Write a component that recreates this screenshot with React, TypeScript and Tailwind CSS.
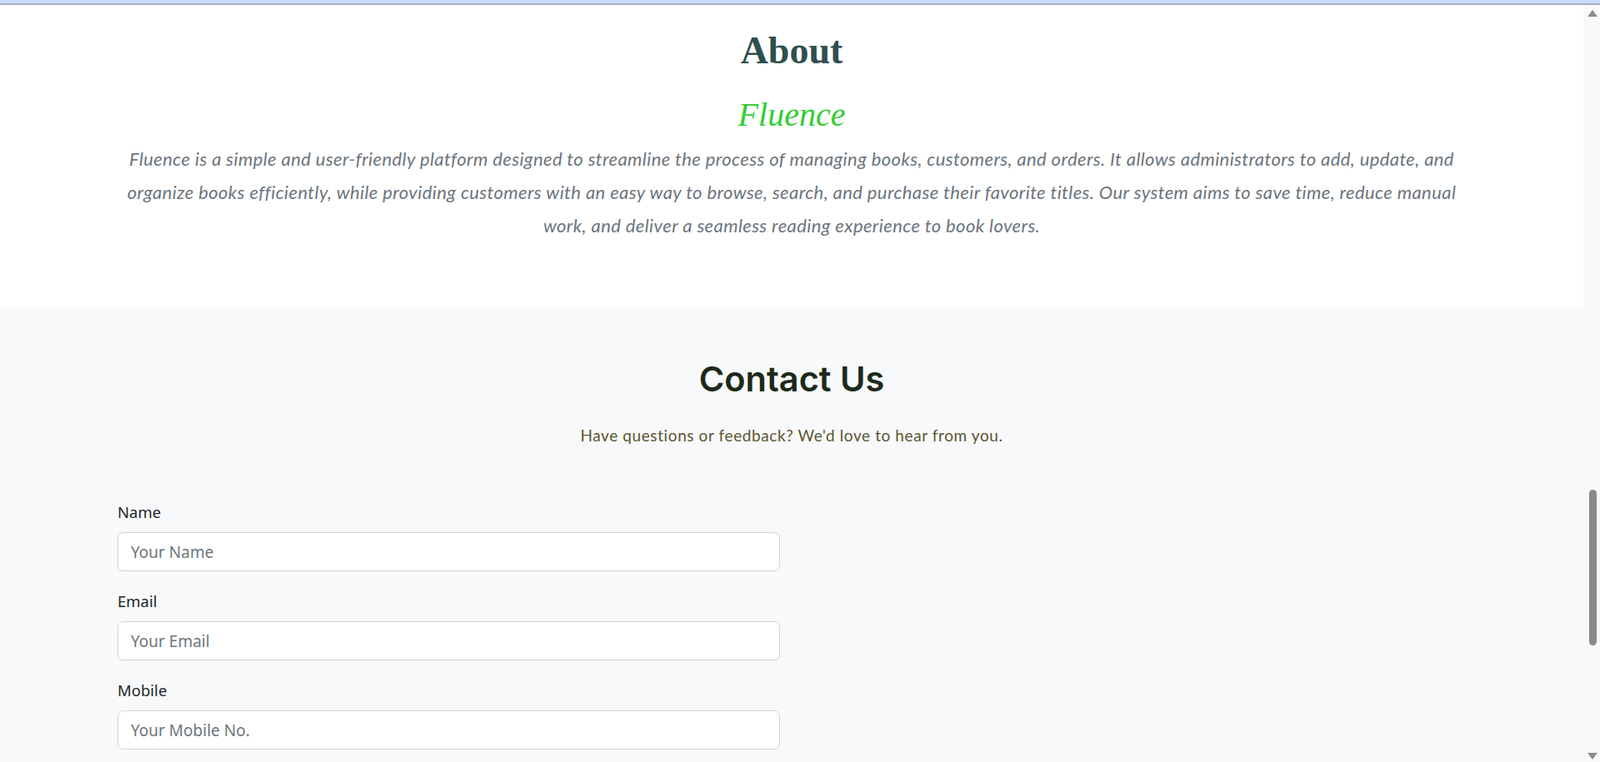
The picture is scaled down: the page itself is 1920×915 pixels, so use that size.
export default function App() {
  const inputCls =
    "block w-full h-[47px] rounded-[7px] border border-[#ced4da] bg-white px-[15px] text-[19px] text-[#212529] placeholder:text-[#6c757d] outline-none";
  const labelCls = "block text-[18.5px] leading-[27px] text-[#212529]";
  return (
    <div className="h-[915px] w-[1920px] overflow-hidden flex flex-col bg-white">
      <div className="h-[4px] bg-[#c7daf6]" />
      <div className="h-[2px] bg-[#a4b0c6]" />
      <div className="flex flex-1 min-h-0">
        <main className="flex-1 min-w-0 overflow-hidden">
          <section className="bg-white pt-[28px] h-[364px] text-center">
            <h2
              className="text-[46px] leading-[53px] font-bold text-[#2f4f4f]"
              style={{ fontFamily: '"Liberation Serif", serif' }}
            >
              About
            </h2>
            <h3
              className="mt-[27px] text-[40px] leading-[48px] italic text-[#32cd32]"
              style={{ fontFamily: '"Liberation Serif", serif' }}
            >
              Fluence
            </h3>
            <p
              className="mt-[9px] text-[22px] leading-[40px] tracking-[0.4px] italic text-[#6c757d]"
              style={{ fontFamily: 'Lato, sans-serif' }}
            >
              Fluence is a simple and user-friendly platform designed to streamline the process of managing books, customers, and orders. It allows administrators to add, update, and
              <br />
              organize books efficiently, while providing customers with an easy way to browse, search, and purchase their favorite titles. Our system aims to save time, reduce manual
              <br />
              work, and deliver a seamless reading experience to book lovers.
            </p>
          </section>
          <section className="bg-[#f8f9fa] pt-[61px] h-[545px]">
            <h2
              className="text-center text-[41.5px] leading-[48px] font-semibold text-[#1c2a1a]"
              style={{ fontFamily: 'Inter, sans-serif' }}
            >
              Contact Us
            </h2>
            <p
              className="mt-[30px] text-center text-[19px] leading-[27px] tracking-[0.6px] text-[#5a5530]"
              style={{ fontFamily: 'Lato, sans-serif' }}
            >
              Have questions or feedback? We'd love to hear from you.
            </p>
            <div className="mx-auto mt-[65px] w-[1618px]" style={{ fontFamily: '"Noto Sans", sans-serif' }}>
              <form className="w-[795px] flex flex-col gap-[22px]">
                <div>
                  <label className={labelCls}>Name</label>
                  <input className={`${inputCls} mt-[11px]`} placeholder="Your Name" />
                </div>
                <div>
                  <label className={labelCls}>Email</label>
                  <input className={`${inputCls} mt-[11px]`} placeholder="Your Email" />
                </div>
                <div>
                  <label className={labelCls}>Mobile</label>
                  <input className={`${inputCls} mt-[11px]`} placeholder="Your Mobile No." />
                </div>
              </form>
            </div>
          </section>
        </main>
        <div className="w-[20px] bg-[#f9f9f9] flex flex-col items-center">
          <svg width="12" height="8" viewBox="0 0 12 8" className="mt-[6px] ml-[2px]">
            <path d="M6 0 L12 8 L0 8 Z" fill="#8b8b8b" />
          </svg>
          <div className="mt-[568px] ml-[2px] h-[187px] w-[9px] rounded-full bg-[#8a8a8a]" />
          <div className="flex-1" />
          <svg width="12" height="8" viewBox="0 0 12 8" className="mb-[3px] ml-[2px]">
            <path d="M0 0 L12 0 L6 8 Z" fill="#8b8b8b" />
          </svg>
        </div>
      </div>
    </div>
  );
}
